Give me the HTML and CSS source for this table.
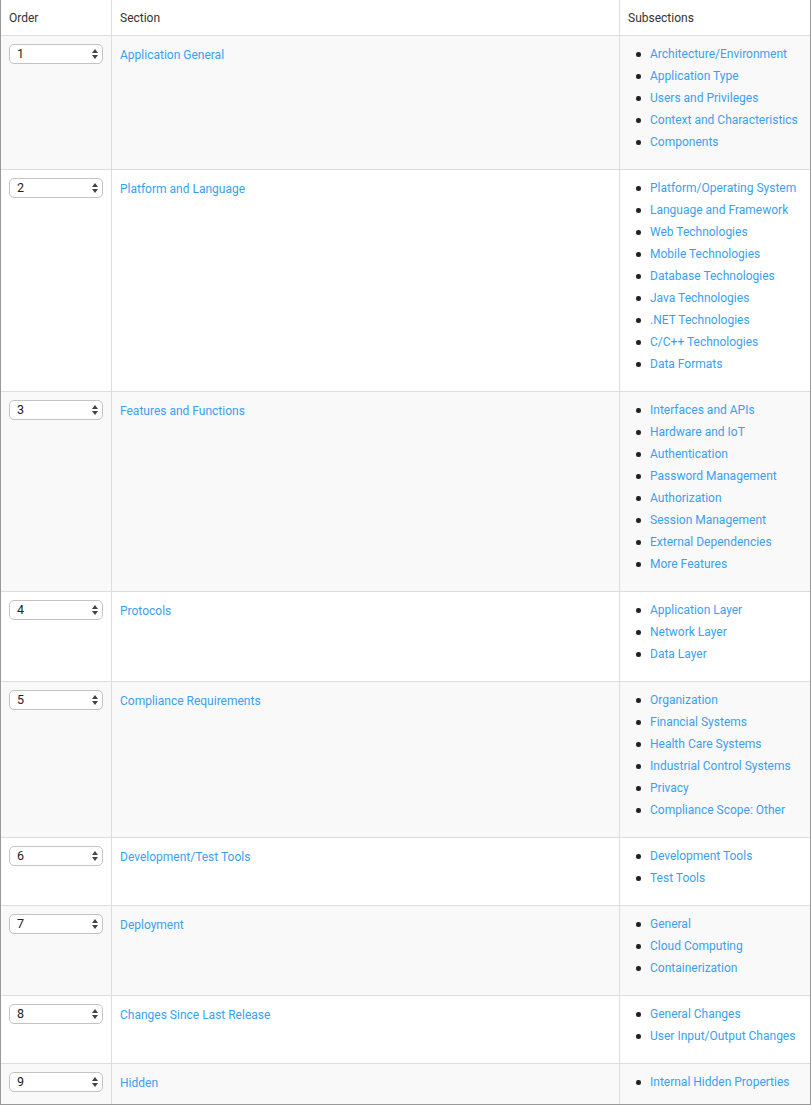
FILE: index.html
```html
<!DOCTYPE html>
<html>
<head>
  <title>Sections</title>
  <link rel="stylesheet" href="styles.css">
</head>
<body>
  <div class="frame">
    <table class="sections">
      <thead>
        <tr>
          <th class="col-order">Order</th>
          <th class="col-section">Section</th>
          <th class="col-sub">Subsections</th>
        </tr>
      </thead>
      <tbody>
        <tr>
          <td><div class="order-select"><span>1</span><i class="arrows"></i></div></td>
          <td><a href="#">Application General</a></td>
          <td>
            <ul>
              <li><a href="#">Architecture/Environment</a></li>
              <li><a href="#">Application Type</a></li>
              <li><a href="#">Users and Privileges</a></li>
              <li><a href="#">Context and Characteristics</a></li>
              <li><a href="#">Components</a></li>
            </ul>
          </td>
        </tr>
        <tr>
          <td><div class="order-select"><span>2</span><i class="arrows"></i></div></td>
          <td><a href="#">Platform and Language</a></td>
          <td>
            <ul>
              <li><a href="#">Platform/Operating System</a></li>
              <li><a href="#">Language and Framework</a></li>
              <li><a href="#">Web Technologies</a></li>
              <li><a href="#">Mobile Technologies</a></li>
              <li><a href="#">Database Technologies</a></li>
              <li><a href="#">Java Technologies</a></li>
              <li><a href="#">.NET Technologies</a></li>
              <li><a href="#">C/C++ Technologies</a></li>
              <li><a href="#">Data Formats</a></li>
            </ul>
          </td>
        </tr>
        <tr>
          <td><div class="order-select"><span>3</span><i class="arrows"></i></div></td>
          <td><a href="#">Features and Functions</a></td>
          <td>
            <ul>
              <li><a href="#">Interfaces and APIs</a></li>
              <li><a href="#">Hardware and IoT</a></li>
              <li><a href="#">Authentication</a></li>
              <li><a href="#">Password Management</a></li>
              <li><a href="#">Authorization</a></li>
              <li><a href="#">Session Management</a></li>
              <li><a href="#">External Dependencies</a></li>
              <li><a href="#">More Features</a></li>
            </ul>
          </td>
        </tr>
        <tr>
          <td><div class="order-select"><span>4</span><i class="arrows"></i></div></td>
          <td><a href="#">Protocols</a></td>
          <td>
            <ul>
              <li><a href="#">Application Layer</a></li>
              <li><a href="#">Network Layer</a></li>
              <li><a href="#">Data Layer</a></li>
            </ul>
          </td>
        </tr>
        <tr>
          <td><div class="order-select"><span>5</span><i class="arrows"></i></div></td>
          <td><a href="#">Compliance Requirements</a></td>
          <td>
            <ul>
              <li><a href="#">Organization</a></li>
              <li><a href="#">Financial Systems</a></li>
              <li><a href="#">Health Care Systems</a></li>
              <li><a href="#">Industrial Control Systems</a></li>
              <li><a href="#">Privacy</a></li>
              <li><a href="#">Compliance Scope: Other</a></li>
            </ul>
          </td>
        </tr>
        <tr>
          <td><div class="order-select"><span>6</span><i class="arrows"></i></div></td>
          <td><a href="#">Development/Test Tools</a></td>
          <td>
            <ul>
              <li><a href="#">Development Tools</a></li>
              <li><a href="#">Test Tools</a></li>
            </ul>
          </td>
        </tr>
        <tr>
          <td><div class="order-select"><span>7</span><i class="arrows"></i></div></td>
          <td><a href="#">Deployment</a></td>
          <td>
            <ul>
              <li><a href="#">General</a></li>
              <li><a href="#">Cloud Computing</a></li>
              <li><a href="#">Containerization</a></li>
            </ul>
          </td>
        </tr>
        <tr>
          <td><div class="order-select"><span>8</span><i class="arrows"></i></div></td>
          <td><a href="#">Changes Since Last Release</a></td>
          <td>
            <ul>
              <li><a href="#">General Changes</a></li>
              <li><a href="#">User Input/Output Changes</a></li>
            </ul>
          </td>
        </tr>
        <tr>
          <td><div class="order-select"><span>9</span><i class="arrows"></i></div></td>
          <td><a href="#">Hidden</a></td>
          <td>
            <ul>
              <li><a href="#">Internal Hidden Properties</a></li>
            </ul>
          </td>
        </tr>
      </tbody>
    </table>
  </div>
</body>
</html>
```

FILE: styles.css
```css
body { margin: 0; font-family: Roboto, "Liberation Sans", Arial, sans-serif; font-size: 12px; color: #333; background: #fff; }
.frame {
  width: 809px;
  height: 1104px;
  overflow: hidden;
  border: 1px solid #999;
  border-top: none;
}
.sections { width: 100%; border-collapse: collapse; table-layout: fixed; }
.sections th, .sections td {
  padding: 8px;
  text-align: left;
  vertical-align: top;
  border: 1px solid #ddd;
  line-height: 18px;
}
.sections tr > :first-child { border-left: none; }
.sections tr > :last-child { border-right: none; }
.sections thead th { border-top: none; font-weight: normal; background: #fff; padding-top: 9px; }
.sections tbody tr:nth-child(odd) { background: #f9f9f9; }
.sections tbody tr:nth-child(even) { background: #fff; }
.sections tbody td { line-height: 22px; padding-top: 7px; }
.sections tbody td > a { display: inline-block; margin-top: 1px; }
.col-order { width: 94px; }
.col-section { width: 491px; }
a { color: #3a9ff2; text-decoration: none; }
ul { margin: 0 0 8px; padding-left: 22px; list-style: none; }
li { position: relative; line-height: 22px; }
li::before {
  content: "";
  position: absolute;
  left: -14px;
  top: 9px;
  width: 4.5px;
  height: 4.5px;
  border-radius: 50%;
  background: #222;
}

.order-select {
  position: relative;
  box-sizing: border-box;
  width: 94px;
  height: 20px;
  margin-top: 1px;
  padding-left: 7px;
  border: 1px solid #c3c3c3;
  border-radius: 5px;
  background: #fff;
  line-height: 17px;
  font-size: 12.5px;
  color: #222;
}
.arrows {
  position: absolute;
  right: 4px;
  top: 4px;
  width: 0;
  height: 0;
  border-left: 3px solid transparent;
  border-right: 3px solid transparent;
  border-bottom: 4px solid #444;
}
.arrows::after {
  content: "";
  position: absolute;
  left: -3px;
  top: 6px;
  border-left: 3px solid transparent;
  border-right: 3px solid transparent;
  border-top: 4px solid #444;
}
```
